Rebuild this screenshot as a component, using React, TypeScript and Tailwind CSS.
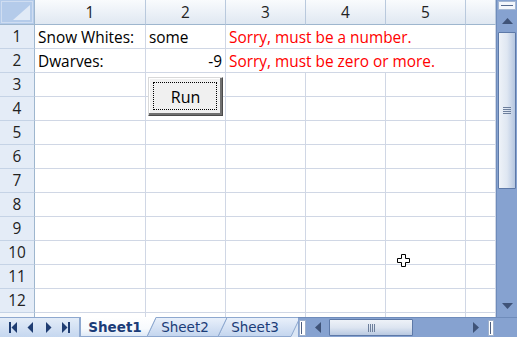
import React from "react";

const GRID = "border-r border-b border-[#d0d7e5]";
const ROWHDR =
  "border-r border-b border-r-[#9eb6ce] border-b-[#c5d3e6] bg-[#e4ecf7] flex items-center justify-center text-[#222] leading-[20px]";
const COLHDR =
  "border-r border-b border-r-[#b9c9dd] border-b-[#9eb6ce] bg-gradient-to-b from-[#f9fbfd] to-[#e0e8f2] flex items-center justify-center text-[#222] pt-[1px]";
const CELL = `${GRID} flex items-end leading-[20px] px-[3px] whitespace-nowrap overflow-visible`;

function Triangle({ dir, className }: { dir: "up" | "down" | "left" | "right"; className?: string }) {
  const pts =
    dir === "up"
      ? "0,6 5.5,0 11,6"
      : dir === "down"
      ? "0,0 11,0 5.5,6"
      : dir === "left"
      ? "6,0 6,11 0,5.5"
      : "0,0 0,11 6,5.5";
  const w = dir === "up" || dir === "down" ? 11 : 6;
  const h = dir === "up" || dir === "down" ? 6 : 11;
  return (
    <svg width={w} height={h} viewBox={`0 0 ${w} ${h}`} className={className}>
      <polygon points={pts} fill="#3f5378" />
    </svg>
  );
}

function NavIcon({ kind }: { kind: "first" | "prev" | "next" | "last" }) {
  return (
    <svg width="10" height="11" viewBox="0 0 10 11">
      {kind === "first" && (
        <>
          <rect x="1" y="0" width="2" height="11" fill="#1f3d72" />
          <polygon points="9,0 9,11 3.5,5.5" fill="#1f3d72" />
        </>
      )}
      {kind === "prev" && <polygon points="7,0 7,11 1.5,5.5" fill="#1f3d72" />}
      {kind === "next" && <polygon points="3,0 3,11 8.5,5.5" fill="#1f3d72" />}
      {kind === "last" && (
        <>
          <polygon points="1,0 1,11 6.5,5.5" fill="#1f3d72" />
          <rect x="7" y="0" width="2" height="11" fill="#1f3d72" />
        </>
      )}
    </svg>
  );
}

function VScroll() {
  return (
    <div className="w-[21px] h-[317px] bg-[#86a2d0] border-l border-[#6f8cbb] flex flex-col items-center">
      <div className="mt-[1px] w-[18px] h-[9px] bg-[#f3f6fb] border border-[#a4b7d3] flex items-center justify-center">
        <div className="w-[12px] h-[1px] bg-[#54698e]" />
      </div>
      <div className="h-[22px] flex items-center justify-center">
        <Triangle dir="up" />
      </div>
      <div className="w-[18px] h-[157px] border border-[#5d79a8] rounded-[1px] bg-gradient-to-r from-[#eef2f8] via-[#dfe7f2] to-[#b5c6e0] flex items-center justify-center">
        <div className="flex flex-col gap-[1px]">
          <div className="w-[8px] h-[1px] bg-[#6d7f9c]" />
          <div className="w-[8px] h-[1px] bg-[#6d7f9c]" />
          <div className="w-[8px] h-[1px] bg-[#6d7f9c]" />
          <div className="w-[8px] h-[1px] bg-[#6d7f9c]" />
        </div>
      </div>
      <div className="flex-1" />
      <div className="h-[22px] flex items-center justify-center">
        <Triangle dir="down" />
      </div>
    </div>
  );
}

function HScroll() {
  return (
    <div className="w-[199px] h-[20px] bg-[#86a2d0] border-t border-[#6f8cbb] flex items-center">
      <div className="ml-[1px] w-[7px] h-[16px] bg-white border border-[#9fb1cc] flex items-center justify-start pl-[1px]">
        <div className="w-[1px] h-[12px] bg-[#4d5f80]" />
      </div>
      <div className="w-[23px] h-full flex items-center justify-center">
        <Triangle dir="left" />
      </div>
      <div className="w-[84px] h-[17px] border border-[#5d79a8] rounded-[1px] bg-gradient-to-b from-[#eef2f8] via-[#dde5f1] to-[#b9c9e1] flex items-center justify-center">
        <div className="flex gap-[1px]">
          <div className="w-[1px] h-[8px] bg-[#6d7f9c]" />
          <div className="w-[1px] h-[8px] bg-[#6d7f9c]" />
          <div className="w-[1px] h-[8px] bg-[#6d7f9c]" />
          <div className="w-[1px] h-[8px] bg-[#6d7f9c]" />
        </div>
      </div>
      <div className="w-[53px]" />
      <div className="w-[20px] h-full flex items-center justify-center">
        <Triangle dir="right" />
      </div>
      <div className="ml-[2px] w-[6px] h-[16px] bg-white border border-[#9fb1cc] flex items-center pl-[1px]">
        <div className="w-[1px] h-[12px] bg-[#4d5f80]" />
      </div>
    </div>
  );
}

function Tabs() {
  return (
    <div className="relative w-[218px] h-[20px] bg-[#dbe6f4] border-t border-[#8ea8cf]">
      <svg className="absolute left-0 top-[-1px]" width="218" height="20" viewBox="0 0 218 20">
        <defs>
          <linearGradient id="tabIn" x1="0" y1="0" x2="0" y2="1">
            <stop offset="0" stopColor="#eaf1fb" />
            <stop offset="1" stopColor="#c3d5ee" />
          </linearGradient>
          <linearGradient id="tabAct" x1="0" y1="0" x2="0" y2="1">
            <stop offset="0" stopColor="#ffffff" />
            <stop offset="0.6" stopColor="#f7fafd" />
            <stop offset="1" stopColor="#dde8f6" />
          </linearGradient>
        </defs>
        <polygon points="138,19.5 147,0.5 220,0.5 211,19.5" fill="url(#tabIn)" stroke="#8ea8cf" />
        <polygon points="67,19.5 76,0.5 147,0.5 138,19.5" fill="url(#tabIn)" stroke="#8ea8cf" />
        <polygon points="0,0 76,0 67,19.5 0,19.5" fill="url(#tabAct)" />
        <line x1="67" y1="19.5" x2="76" y2="0.5" stroke="#8ea8cf" />
        <line x1="0" y1="19.5" x2="67" y2="19.5" stroke="#8ea8cf" />
        <line x1="0.5" y1="0" x2="0.5" y2="20" stroke="#8ea8cf" />
      </svg>
      <div className="relative flex h-full items-center font-['DejaVu_Sans',sans-serif] text-[13.5px] text-[#1b3c78]">
        <span className="w-[70px] text-center font-bold">Sheet1</span>
        <span className="w-[70px] text-center">Sheet2</span>
        <span className="w-[70px] text-center">Sheet3</span>
      </div>
    </div>
  );
}

export default function App() {
  const rows = Array.from({ length: 12 }, (_, i) => i + 1);
  return (
    <div className="w-[517px] h-[337px] overflow-hidden bg-white flex flex-col font-['Open_Sans',sans-serif] text-[15.4px] text-black">
      <div className="flex h-[317px]">
        <div className="relative w-[496px] h-[317px] overflow-hidden">
          <div className="grid grid-cols-[35px_111px_80px_80px_80px_80px_30px] grid-rows-[25px_repeat(12,24px)_4px]">
            {/* header row */}
            <div className="border-r border-b border-r-[#9eb6ce] border-b-[#9eb6ce] bg-[#b4cbea] p-[1px]">
              <div className="w-full h-full border border-[#cfddf1] flex items-end justify-end p-[2px]">
                <svg width="17" height="15" viewBox="0 0 17 15">
                  <polygon points="17,0 17,15 0,15" fill="#e1eaf6" />
                </svg>
              </div>
            </div>
            {["1", "2", "3", "4", "5", ""].map((c, i) => (
              <div key={i} className={COLHDR}>
                {c}
              </div>
            ))}
            {rows.map((r) => (
              <React.Fragment key={r}>
                <div className={ROWHDR}>{r}</div>
                {r === 1 && (
                  <>
                    <div className={CELL}>Snow Whites:</div>
                    <div className={CELL}>some</div>
                    <div className={`${CELL} col-span-3 text-[#ff0000]`}>Sorry, must be a number.</div>
                    <div className={CELL} />
                  </>
                )}
                {r === 2 && (
                  <>
                    <div className={CELL}>Dwarves:</div>
                    <div className={`${CELL} justify-end`}>-9</div>
                    <div className={`${CELL} col-span-3 text-[#ff0000]`}>Sorry, must be zero or more.</div>
                    <div className={CELL} />
                  </>
                )}
                {r > 2 &&
                  [0, 1, 2, 3, 4, 5].map((c) => <div key={c} className={CELL} />)}
              </React.Fragment>
            ))}
            <div className="border-r border-[#9eb6ce] bg-[#f4f7fb]" />
            {[0, 1, 2, 3, 4, 5].map((c) => (
              <div key={c} className="border-r border-[#d0d7e5]" />
            ))}
          </div>

          {/* Run button */}
          <div className="absolute left-[148px] top-[77px] w-[75px] h-[39px] bg-[#f0f0f0] border border-[#d9d9d9] border-r-[#4a4a4a] border-b-[#4a4a4a] shadow-[inset_-2px_-2px_0_#707070,inset_1px_1px_0_#ffffff] flex items-center justify-center text-[16px] text-black">
            <div className="absolute left-[4px] top-[4px] right-[5px] bottom-[5px] border border-dotted border-black" />
            <span className="relative">Run</span>
          </div>

          {/* cursor */}
          <svg className="absolute left-[397px] top-[254px]" width="13" height="13" viewBox="0 0 13 13">
            <polygon
              points="4.5,0.5 8.5,0.5 8.5,4.5 12.5,4.5 12.5,8.5 8.5,8.5 8.5,12.5 4.5,12.5 4.5,8.5 0.5,8.5 0.5,4.5 4.5,4.5"
              fill="#ffffff"
              stroke="#000000"
            />
          </svg>
        </div>
        <VScroll />
      </div>
      <div className="flex h-[20px]">
        <div className="w-[80px] h-[20px] bg-gradient-to-b from-[#e3ecf8] to-[#c5d7ef] border-t border-r border-[#8ea8cf] flex items-center justify-around px-[4px]">
          <NavIcon kind="first" />
          <NavIcon kind="prev" />
          <NavIcon kind="next" />
          <NavIcon kind="last" />
        </div>
        <Tabs />
        <HScroll />
        <div className="w-[20px] h-[20px] bg-[#86a2d0] border-t border-[#6f8cbb]" />
      </div>
    </div>
  );
}
